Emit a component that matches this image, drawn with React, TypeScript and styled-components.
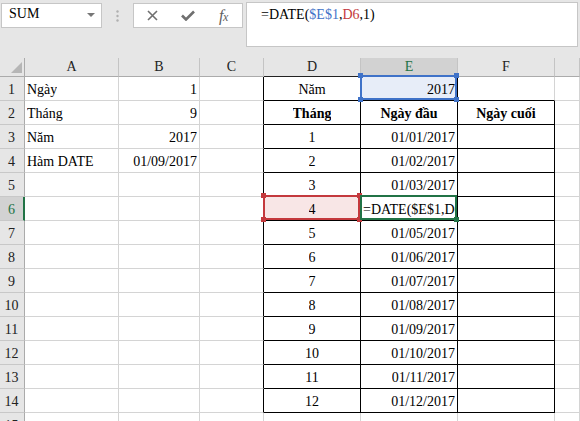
import React from 'react';
import styled, { createGlobalStyle } from 'styled-components';

const GlobalStyle = createGlobalStyle`
  body {
    margin: 0;
    background: #fff;
    font-family: "Liberation Serif", "Times New Roman", serif;
    font-size: 14px;
    color: #000;
    overflow: hidden;
  }
`;

const Sheet = styled.div`
  width: 580px;
  height: 421px;
  overflow: hidden;
  background: #e6e6e6;
`;

/* ---------- formula bar ---------- */

const Toolbar = styled.div`
  display: flex;
  align-items: flex-start;
  height: 58px;
  box-sizing: border-box;
  padding: 2px 2px 0 1px;
`;

const NameBox = styled.div`
  display: flex;
  align-items: flex-start;
  justify-content: space-between;
  width: 101px;
  height: 25px;
  margin-top: 1px;
  box-sizing: border-box;
  padding: 2px 6px 0 7px;
  background: #fff;
  border: 1px solid #c6c6c6;
`;

const Caret = styled.span`
  margin-top: 7px;
  border-left: 4px solid transparent;
  border-right: 4px solid transparent;
  border-top: 4px solid #777;
`;

const Grip = styled.div`
  display: flex;
  justify-content: center;
  width: 31px;
  padding-top: 8px;
`;

const FnBox = styled.div`
  display: flex;
  align-items: center;
  width: 110px;
  height: 25px;
  margin-top: 1px;
  box-sizing: border-box;
  padding: 0 1px;
  background: #fff;
  border: 1px solid #c6c6c6;
`;

const FnButton = styled.span`
  display: flex;
  align-items: center;
  justify-content: center;
  width: 36px;
  height: 100%;
  color: #6a6a6a;
`;

const Fx = styled.span`
  font-style: italic;
  font-size: 16px;
  color: #5f5f5f;
  letter-spacing: -0.5px;

  small {
    font-size: 12px;
  }
`;

const FormulaInput = styled.div`
  flex: 1;
  height: 45px;
  margin-left: 3px;
  box-sizing: border-box;
  padding: 4px 0 0 14px;
  background: #fff;
  border: 1px solid #c6c6c6;
`;

const Ref = styled.span<{ $color: string }>`
  color: ${p => p.$color};
`;

/* ---------- grid ---------- */

const Grid = styled.div`
  display: grid;
  grid-template-columns: 25px 94px 81px 64px 97px 97px 97px 1fr;
  grid-template-rows: 19px;
  grid-auto-rows: 24px;
  background: #fff;
`;

const Corner = styled.div`
  display: flex;
  align-items: flex-end;
  justify-content: flex-end;
  padding: 0 2px 3px 0;
  box-sizing: border-box;
  background: #e6e6e6;
  border-right: 1px solid #ababab;
  border-bottom: 1px solid #ababab;

  &::after {
    content: '';
    border-left: 11px solid transparent;
    border-bottom: 11px solid #b6b6b6;
  }
`;

const ColHead = styled.div<{ $active?: boolean; $edge?: string }>`
  display: flex;
  align-items: flex-end;
  justify-content: center;
  box-sizing: border-box;
  padding-bottom: ${p => (p.$active ? 0 : 1)}px;
  background: ${p => (p.$active ? '#d2d2d2' : '#e6e6e6')};
  color: ${p => (p.$active ? '#217346' : '#222')};
  border-right: 1px solid #c4c4c4;
  border-bottom: ${p => (p.$active ? '2px solid #217346' : `1px solid ${p.$edge || '#ababab'}`)};
`;

const RowHead = styled.div<{ $active?: boolean }>`
  display: flex;
  align-items: flex-end;
  justify-content: center;
  box-sizing: border-box;
  padding: 0 ${p => (p.$active ? 0 : 1)}px 2px 0;
  background: ${p => (p.$active ? '#d2d2d2' : '#e6e6e6')};
  color: ${p => (p.$active ? '#217346' : '#222')};
  border-right: ${p => (p.$active ? '2px solid #217346' : '1px solid #ababab')};
  border-bottom: 1px solid #c8c8c8;
`;

type Align = 'left' | 'center' | 'right';

const Cell = styled.div<{ $align: Align; $bold?: boolean; $right: string; $bottom: string; $bg?: string }>`
  position: relative;
  display: flex;
  align-items: flex-end;
  justify-content: ${p => (p.$align === 'right' ? 'flex-end' : p.$align === 'center' ? 'center' : 'flex-start')};
  box-sizing: border-box;
  padding: 0 2px 2px;
  min-width: 0;
  white-space: nowrap;
  background: ${p => p.$bg || '#fff'};
  font-weight: ${p => (p.$bold ? 700 : 400)};
  border-right: 1px solid ${p => p.$right};
  border-bottom: 1px solid ${p => p.$bottom};
`;

const Value = styled.span`
  overflow: hidden;
  min-width: 0;
`;

const Selection = styled.div<{ $color: string }>`
  position: absolute;
  top: -2px;
  left: -1px;
  right: 0;
  bottom: 0;
  box-shadow: inset 0 0 0 2px ${p => p.$color};
  pointer-events: none;
  z-index: 2;
`;

const Handle = styled.span<{ $color: string; $v: 'top' | 'bottom'; $h: 'left' | 'right' }>`
  position: absolute;
  ${p => p.$v}: -2px;
  ${p => p.$h}: -2px;
  width: 5px;
  height: 5px;
  background: ${p => p.$color};
`;

/* ---------- data ---------- */

type CellData = { v: string; align?: Align; bold?: boolean };

const GRID = '#d4d4d4';
const BLACK = '#000';
const BLUE = '#3f72c8';
const RED = '#c4393d';
const GREEN = '#217346';

const columns = ['A', 'B', 'C', 'D', 'E', 'F', ''];

const months = ['01', '02', '03', '04', '05', '06', '07', '08', '09', '10', '11', '12'];

const rows: Record<number, Record<number, CellData>> = {
  1: { 0: { v: 'Ngày' }, 1: { v: '1', align: 'right' }, 3: { v: 'Năm', align: 'center' }, 4: { v: '2017', align: 'right' } },
  2: {
    0: { v: 'Tháng' },
    1: { v: '9', align: 'right' },
    3: { v: 'Tháng', align: 'center', bold: true },
    4: { v: 'Ngày đầu', align: 'center', bold: true },
    5: { v: 'Ngày cuối', align: 'center', bold: true },
  },
  3: { 0: { v: 'Năm' }, 1: { v: '2017', align: 'right' } },
  4: { 0: { v: 'Hàm DATE' }, 1: { v: '01/09/2017', align: 'right' } },
};

months.forEach((m, i) => {
  const r = i + 3;
  rows[r] = { ...(rows[r] || {}), 3: { v: String(i + 1), align: 'center' } };
  rows[r][4] = i === 3 ? { v: '=DATE($E$1,D6,1)', align: 'left' } : { v: `01/${m}/2017`, align: 'right' };
});

const rightColor = (c: number, r: number) => {
  if (r > 14) return GRID;
  if (c >= 2 && c <= 4) return BLACK;
  if (c === 5 && r >= 2) return BLACK;
  return GRID;
};

const bottomColor = (c: number, r: number) => (c >= 3 && c <= 5 && r <= 14 ? BLACK : GRID);

const corners: Array<['top' | 'bottom', 'left' | 'right']> = [
  ['top', 'left'],
  ['top', 'right'],
  ['bottom', 'left'],
  ['bottom', 'right'],
];

const selections: Record<string, { color: string; bg?: string; fill?: boolean }> = {
  '1-4': { color: BLUE, bg: '#e7edf8' },
  '6-3': { color: RED, bg: '#f8e6e6' },
  '6-4': { color: GREEN, fill: true },
};

const CloseIcon = () => (
  <svg width="11" height="11" viewBox="0 0 11 11">
    <path d="M1 1 L10 10 M10 1 L1 10" stroke="#6f6f6f" strokeWidth="1.6" fill="none" />
  </svg>
);

const CheckIcon = () => (
  <svg width="14" height="11" viewBox="0 0 14 11">
    <path d="M1 5.5 L5 9.5 L13 1.5" stroke="#6f6f6f" strokeWidth="2.6" fill="none" />
  </svg>
);

const GripDots = () => (
  <svg width="3" height="12" viewBox="0 0 3 12">
    <circle cx="1.5" cy="1.5" r="1.2" fill="#b0b0b0" />
    <circle cx="1.5" cy="6" r="1.2" fill="#b0b0b0" />
    <circle cx="1.5" cy="10.5" r="1.2" fill="#b0b0b0" />
  </svg>
);

const App = () => (
  <Sheet>
    <GlobalStyle />
    <Toolbar>
      <NameBox>
        <span>SUM</span>
        <Caret />
      </NameBox>
      <Grip>
        <GripDots />
      </Grip>
      <FnBox>
        <FnButton>
          <CloseIcon />
        </FnButton>
        <FnButton>
          <CheckIcon />
        </FnButton>
        <FnButton>
          <Fx>
            f<small>x</small>
          </Fx>
        </FnButton>
      </FnBox>
      <FormulaInput>
        =DATE(<Ref $color={BLUE}>$E$1</Ref>,<Ref $color={RED}>D6</Ref>,1)
      </FormulaInput>
    </Toolbar>

    <Grid>
      <Corner />
      {columns.map((c, i) => (
        <ColHead key={i} $active={c === 'E'} $edge={c === 'D' ? '#222' : undefined}>
          {c}
        </ColHead>
      ))}
      {Array.from({ length: 15 }, (_, i) => i + 1).map(r => (
        <React.Fragment key={r}>
          <RowHead $active={r === 6}>{r}</RowHead>
          {columns.map((_, c) => {
            const data = rows[r]?.[c];
            const sel = selections[`${r}-${c}`];
            return (
              <Cell
                key={c}
                $align={data?.align || 'left'}
                $bold={data?.bold}
                $right={rightColor(c, r)}
                $bottom={bottomColor(c, r)}
                $bg={sel?.bg}
              >
                {data && <Value>{data.v}</Value>}
                {sel && (
                  <Selection $color={sel.color}>
                    {(sel.fill ? corners.slice(3) : corners).map(([v, h]) => (
                      <Handle key={v + h} $color={sel.color} $v={v} $h={h} />
                    ))}
                  </Selection>
                )}
              </Cell>
            );
          })}
        </React.Fragment>
      ))}
    </Grid>
  </Sheet>
);

export default App;
